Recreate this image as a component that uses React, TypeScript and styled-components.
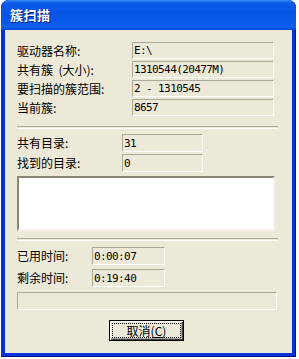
import React from "react";
import styled, { createGlobalStyle } from "styled-components";

const Global = createGlobalStyle`
  html, body { margin: 0; padding: 0; background: #ffffff; }
  body { font-family: "Noto Sans CJK SC", "Liberation Sans", sans-serif; }
`;

const Window = styled.div`
  margin-left: 1px;
  width: 295px;
  height: 357px;
  display: flex;
  flex-direction: column;
  border-radius: 8px 8px 0 0;
  overflow: hidden;
  background: #0831d9;
  box-sizing: border-box;
  box-shadow: inset -1px -1px #00138c, inset 1px 1px #0831d9;
`;

const TitleBar = styled.div`
  height: 30px;
  flex: none;
  display: flex;
  align-items: center;
  padding-left: 9px;
  background: linear-gradient(
    180deg,
    #3d8cf5 0%,
    #0a5ae6 10%,
    #0653e4 45%,
    #0a5ae8 80%,
    #1262ee 90%,
    #0546d4 100%
  );
`;

const Title = styled.span`
  color: #ffffff;
  font-family: "Noto Sans CJK SC", sans-serif;
  font-weight: 700;
  font-size: 13px;
  letter-spacing: 0.5px;
  text-shadow: 1px 1px #0a1e80;
  margin-top: -1px;
`;

const Body = styled.div`
  flex: 1;
  margin: 0 4px 4px 4px;
  background: #ece9d8;
  padding: 12px 14px 0 12px;
  display: flex;
  flex-direction: column;
  font-size: 12px;
  color: #000000;
`;

const Group = styled.div<{ $label: number; $field: number; $gap: number; $row: number }>`
  display: grid;
  grid-template-columns: ${(p) => p.$label}px ${(p) => p.$field}px;
  grid-auto-rows: ${(p) => p.$row}px;
  row-gap: ${(p) => p.$gap}px;
  align-items: center;
`;

const Label = styled.div`
  font-family: "Noto Sans CJK SC", sans-serif;
  font-size: 12px;
  line-height: 14px;
  white-space: pre;
`;

const Field = styled.div`
  height: 100%;
  box-sizing: border-box;
  border-top: 1px solid #aca899;
  border-left: 1px solid #aca899;
  border-bottom: 1px solid #ffffff;
  border-right: 1px solid #ffffff;
  padding-left: 1px;
  display: flex;
  align-items: center;
  font-family: "DejaVu Sans Mono", monospace;
  font-size: 11px;
  letter-spacing: -0.6px;
  white-space: nowrap;
`;

const Separator = styled.div<{ $top: number; $bottom: number }>`
  width: 261px;
  height: 1px;
  border-top: 1px solid #aca899;
  border-bottom: 1px solid #ffffff;
  margin-top: ${(p) => p.$top}px;
  margin-bottom: ${(p) => p.$bottom}px;
`;

const ListBox = styled.div`
  width: 258px;
  height: 55px;
  box-sizing: border-box;
  margin-top: 4px;
  background: #ffffff;
  border-top: 2px solid #8a8778;
  border-left: 2px solid #8a8778;
  border-bottom: 2px solid #f4f2e8;
  border-right: 2px solid #f4f2e8;
`;

const Progress = styled.div`
  width: 260px;
  height: 18px;
  margin-top: 5px;
  box-sizing: border-box;
  border-top: 1px solid #aca899;
  border-left: 1px solid #aca899;
  border-bottom: 1px solid #ffffff;
  border-right: 1px solid #ffffff;
`;

const ButtonRow = styled.div`
  display: flex;
  justify-content: center;
  margin-top: 10px;
  padding-right: 2px;
`;

const Button = styled.button`
  width: 75px;
  height: 21px;
  box-sizing: border-box;
  padding: 2px;
  background: #ece9d8;
  border: 1px solid #000000;
  box-shadow: inset 1px 1px #ffffff, inset -1px -1px #404040, inset -2px -2px #aca899;
  display: flex;
  align-items: stretch;
  justify-content: stretch;
  cursor: default;
`;

const Focus = styled.span`
  flex: 1;
  border: 1px dotted #000000;
  display: flex;
  align-items: center;
  justify-content: center;
  font-family: "Noto Sans CJK SC", sans-serif;
  font-size: 12px;
  line-height: 12px;
  color: #000000;
`;

const Mnemonic = styled.span`
  text-decoration: underline;
`;

export default function App() {
  return (
    <>
      <Global />
      <Window>
        <TitleBar>
          <Title>簇扫描</Title>
        </TitleBar>
        <Body>
          <Group $label={115} $field={142} $gap={2} $row={17}>
            <Label>驱动器名称:</Label>
            <Field>E:\</Field>
            <Label>共有簇  (大小):</Label>
            <Field>1310544(20477M)</Field>
            <Label>要扫描的簇范围:</Label>
            <Field>2 - 1310545</Field>
            <Label>当前簇:</Label>
            <Field>8657</Field>
          </Group>
          <Separator $top={10} $bottom={5} />
          <Group $label={105} $field={81} $gap={2} $row={18}>
            <Label>共有目录:</Label>
            <Field>31</Field>
            <Label>找到的目录:</Label>
            <Field>0</Field>
          </Group>
          <ListBox />
          <Separator $top={7} $bottom={6} />
          <Group $label={75} $field={73} $gap={4} $row={18}>
            <Label>已用时间:</Label>
            <Field>0:00:07</Field>
            <Label>剩余时间:</Label>
            <Field>0:19:40</Field>
          </Group>
          <Progress />
          <ButtonRow>
            <Button type="button">
              <Focus>
                取消(<Mnemonic>C</Mnemonic>)
              </Focus>
            </Button>
          </ButtonRow>
        </Body>
      </Window>
    </>
  );
}
